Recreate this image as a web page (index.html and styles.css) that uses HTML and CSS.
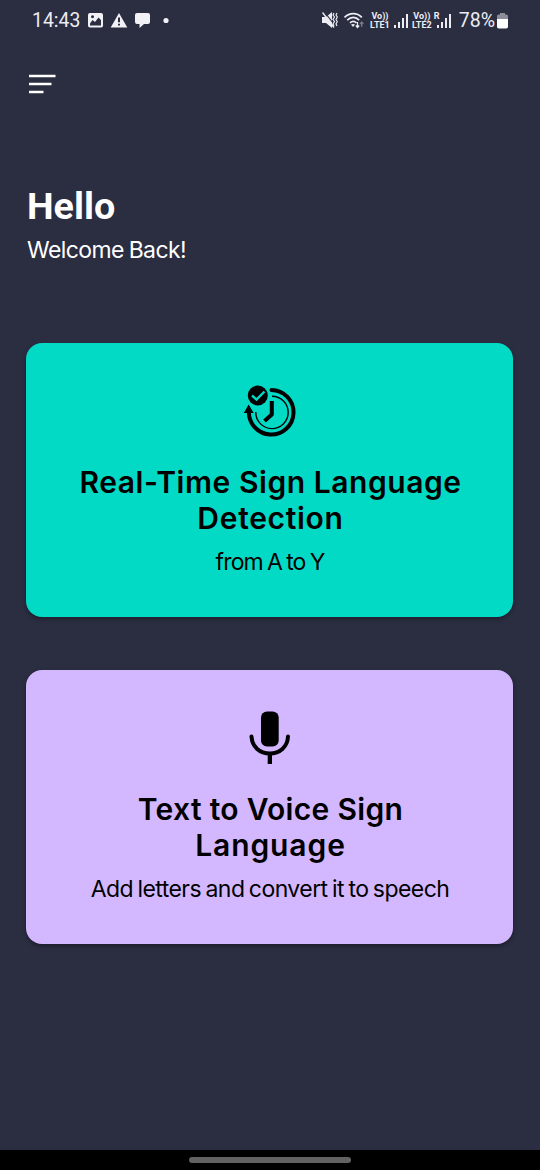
FILE: index.html
```html
<!DOCTYPE html>
<html lang="en">
<head>
<meta charset="utf-8">
<title>Sign Language</title>
<link rel="stylesheet" href="styles.css">
</head>
<body>
<div class="screen">
  <header class="status">
    <div class="status-left">
      <span class="clock">14:43</span>
      <svg class="notices" width="86" height="24" viewBox="0 0 86 24" fill="#f1f1f6">
        <path fill-rule="evenodd" d="M3 5H14a2 2 0 0 1 2 2V17a2 2 0 0 1-2 2.500H3a2 2 0 0 1-2-2V7a2 2 0 0 1 2-2ZM3 15.500V17.500H14V12L11.500 9.500 8 14 5.500 12ZM5.500 7.300a1.500 1.500 0 1 0 .1 0Z"/>
        <path fill-rule="evenodd" d="M32 5 40.300 19.500H23.700ZM31 9.500V14.300H33V9.500ZM31 15.700V17.600H33V15.700Z"/>
        <path d="M50 5H61a2 2 0 0 1 2 2V14a2 2 0 0 1-2 2H57L52.500 20V16H50a2 2 0 0 1-2-2V7a2 2 0 0 1 2-2Z"/>
        <circle cx="79" cy="12.500" r="2.600"/>
      </svg>
    </div>
    <div class="status-right">
      <svg width="42" height="24" viewBox="0 0 42 24" fill="none" stroke="#ececf2">
        <path fill="#ececf2" stroke="none" d="M0 9H4L10 4V20L4 15H0Z"/>
        <path stroke="#2b2d41" stroke-width="1.200" d="M2.500 4 13 17.500"/>
        <path stroke-width="1.500" d="M.5 4.500 12 19.500"/>
        <path stroke-width="1.200" d="M12 5l-1 2 1.500 2-1.500 2.500 1.500 2-1.500 2.500 1 2M15 5l-1 2 1.300 2-1.300 2.500 1.300 2-1.300 2.500 1 2"/>
        <path stroke-width="1.700" d="M22.500 9.300C27.500 4.300 35 4.300 39.800 9.300M25.200 12.200C29 8.500 33.600 8.500 37.200 12.200M28 14.900C30 13.100 32.500 13.100 34.500 14.900"/>
        <path fill="#ececf2" stroke="none" d="M29 16.500q2-1.200 4 0L31 19Z"/>
        <path stroke-width="1.300" d="M35.500 14v5.500M33.800 17.500l1.700 2 1.700-2"/>
        <path stroke="#777989" stroke-width="1.300" d="M39.700 19v-5M38 16l1.700-2 1.700 2"/>
      </svg>
      <span class="lte lte-one"><span>Vo))</span><span>LTE1</span></span>
      <svg class="bars-one" width="15" height="24" viewBox="0 0 15 24" fill="#ececf2"><path d="M0 17h2v3H0ZM4 14h2v6H4ZM8 10h2v10H8ZM12 6h2v14h-2Z"/></svg>
      <span class="lte lte-two"><span>Vo))</span><span>LTE2</span></span>
      <span class="roaming">R</span>
      <svg class="bars-two" width="15" height="24" viewBox="0 0 15 24" fill="#ececf2"><path d="M0 17h2v3H0ZM4 14h2v6H4ZM8 10h2v10H8ZM12 6h2v14h-2Z"/></svg>
      <span class="percent">78%</span>
      <svg class="battery" width="12" height="24" viewBox="0 0 12 24"><path fill="#8c8d99" d="M3 5h5V6.500h1.500a1.500 1.500 0 0 1 1.500 1.500V12H0V8A1.500 1.500 0 0 1 1.500 6.500H3Z"/><path fill="#fff" d="M0 11H11V18.700a1.800 1.800 0 0 1-1.800 1.800H1.800A1.800 1.800 0 0 1 0 18.700Z"/></svg>
    </div>
  </header>

  <main class="content">
    <svg class="menu" width="30" height="22" viewBox="0 0 30 22" fill="none" stroke="#fff" stroke-width="2.600"><path d="M3 3H29.500M3 11H25.500M3 19H17.500"/></svg>
    <h1 class="hello">Hello</h1>
    <p class="welcome">Welcome Back!</p>

    <section class="card card-teal">
      <svg class="card-icon" width="70" height="70" viewBox="0 0 70 70" fill="none" stroke="#000">
        <path stroke-width="4" stroke-linecap="round" d="M36.500 15A22.300 22.300 0 1 1 14 35.500"/>
        <path stroke-width="1.400" d="M37 21.200A16.200 16.200 0 1 1 20.800 37"/>
        <path stroke-width="4" stroke-linejoin="round" d="M36.800 26V39.500L29.500 46"/>
        <path fill="#000" stroke="none" d="M13.600 29.500 18.700 38H8.800Z"/>
        <circle cx="22.800" cy="20.500" r="10" fill="#000" stroke="none"/>
        <path stroke="#03dac5" stroke-width="2.400" d="M17 20.500 21.500 24.500 29.500 16.500"/>
      </svg>
      <h2 class="card-title"><span class="t1">Real-Time Sign Language</span><br><span class="t2">Detection</span></h2>
      <p class="card-sub s1">from A to Y</p>
    </section>

    <section class="card card-purple">
      <svg class="card-icon" width="70" height="70" viewBox="0 0 70 70">
        <rect x="26" y="9.500" width="17.700" height="35" rx="6"/>
        <path fill="none" stroke="#000" stroke-width="4" stroke-linecap="round" d="M16.500 34.500C17 45 25 51.500 34.800 51.500S52.500 45 53 34.500"/>
        <path d="M32.700 51H37V62H32.700Z"/>
      </svg>
      <h2 class="card-title"><span class="t3">Text to Voice Sign</span><br><span class="t4">Language</span></h2>
      <p class="card-sub s2">Add letters and convert it to speech</p>
    </section>
  </main>

  <footer class="navbar"><div class="handle"></div></footer>
</div>
</body>
</html>
```
FILE: styles.css
```css
* { box-sizing: border-box; }
body, h1, h2, p { margin: 0; }
svg { display: block; flex: none; }
.screen {
  width: 540px;
  height: 1170px;
  display: flex;
  flex-direction: column;
  background: #2b2d41;
  color: #fff;
  font-family: Inter, "Liberation Sans", sans-serif;
  overflow: hidden;
}
.status {
  height: 40px;
  padding: 8px 31px 8px 32px;
  display: flex;
  justify-content: space-between;
  color: #ececf2;
  font-family: Roboto, sans-serif;
}
.status-left, .status-right { display: flex; white-space: nowrap; }
.clock { width: 55px; font-size: 19.4px; line-height: 26px; }
.status-right { width: 187px; }
.lte {
  width: 21px;
  margin-left: 6px;
  display: flex;
  flex-direction: column;
  align-items: center;
  padding-top: 4px;
  font-size: 9px;
  line-height: 9px;
  font-weight: 700;
}
.bars-one { margin-left: 4px; }
.lte-two { margin-left: 3px; }
.roaming { width: 5px; margin-left: 2px; padding-top: 4px; font-size: 9px; line-height: 9px; font-weight: 700; }
.bars-two { margin-left: -2px; }
.percent { width: 37px; margin-left: 7px; font-size: 19.5px; line-height: 26px; }
.battery { margin-left: 2px; }
.content { flex: 1; padding: 33px 27px 0 26px; }
.hello {
  margin-top: 89px;
  padding-left: 1px;
  font-family: Roboto, sans-serif;
  font-weight: 700;
  font-size: 37.7px;
  line-height: 44px;
}
.welcome { margin-top: 8px; padding-left: 1px; font-size: 23px; line-height: 28px; letter-spacing: -0.6px; word-spacing: -1px; }
.card {
  height: 274.5px;
  padding: 33px 0 0;
  border-radius: 16px;
  color: #000;
  text-align: center;
  box-shadow: 0 2px 4px rgba(0, 0, 0, .35);
}
.card-teal { margin-top: 78.6px; background: #03dac5; }
.card-purple { margin-top: 52.7px; background: #d4b8ff; }
.card-icon { margin: -1px auto 0; }
.card-title { margin-top: 19px; padding-left: 2px; font-size: 30px; line-height: 36.5px; font-weight: 600; white-space: nowrap; }
.t1 { letter-spacing: .55px; }
.t2 { letter-spacing: .7px; }
.t3 { letter-spacing: .3px; }
.t4 { letter-spacing: .9px; }
.card-sub { margin-top: 11px; padding-left: 1px; font-size: 23px; line-height: 28px; white-space: nowrap; word-spacing: -1.5px; }
.s1 { letter-spacing: -.85px; }
.s2 { letter-spacing: -.55px; }
.navbar { height: 20px; padding-top: 7px; background: #000; }
.handle { width: 162px; height: 6px; margin: 0 auto; border-radius: 3px; background: #626262; }
```
